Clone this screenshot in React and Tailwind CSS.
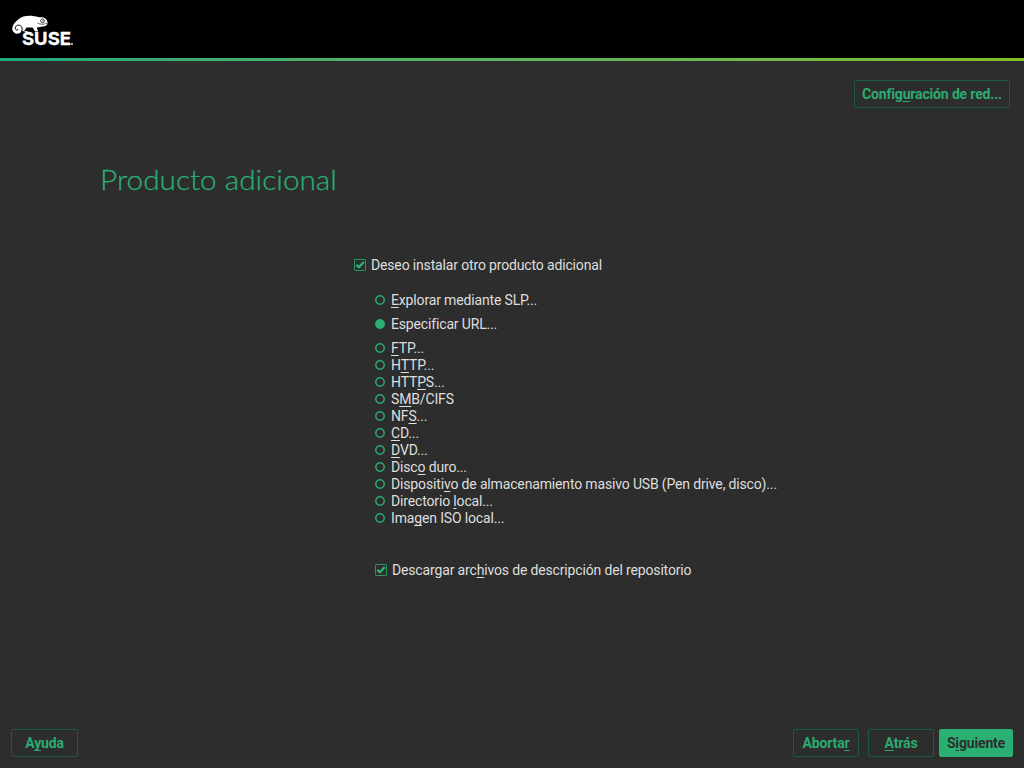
import React from 'react';

const SOURCES = [
  ['', 'F', 'TP...'],
  ['H', 'T', 'TP...'],
  ['HTT', 'P', 'S...'],
  ['S', 'M', 'B/CIFS'],
  ['NF', 'S', '...'],
  ['', 'C', 'D...'],
  ['', 'D', 'VD...'],
  ['Disc', 'o', ' duro...'],
  ['Dispositi', 'v', 'o de almacenamiento masivo USB (Pen drive, disco)...'],
  ['Directorio ', 'l', 'ocal...'],
  ['Ima', 'g', 'en ISO local...'],
];

function Label({ parts }) {
  const [before, key, after] = parts;
  return (
    <span className="whitespace-pre">
      {before}
      {key && <span className="underline decoration-1 underline-offset-2 [text-decoration-skip-ink:none]">{key}</span>}
      {after}
    </span>
  );
}

function Radio({ parts, checked = false }) {
  return (
    <label className="flex h-[17px] items-center gap-[6px]">
      <svg width="10" height="10" viewBox="0 0 10 10" className="mb-px shrink-0">
        <circle cx="5" cy="5" r={checked ? 4.9 : 4.2} fill={checked ? '#2bb073' : 'none'} stroke="#2bab70" strokeWidth={checked ? 0 : 1.5} />
      </svg>
      <Label parts={parts} />
    </label>
  );
}

function Check({ parts }) {
  return (
    <label className="flex h-[17px] items-center gap-[5px]">
      <svg width="12" height="12" viewBox="0 0 12 12" className="mb-px shrink-0" fill="none">
        <rect x="0.5" y="0.5" width="11" height="11" rx="0.6" stroke="#249864" />
        <path d="M2.3 5.8 4.9 8.2 9.8 3" stroke="#2bb577" strokeWidth="2.3" />
      </svg>
      <Label parts={parts} />
    </label>
  );
}

function Button({ parts, className, primary = false }) {
  return (
    <button
      className={`flex h-7 items-center justify-center rounded-[2px] border pt-px font-bold ${
        primary ? 'border-[#2bb073] bg-[#2bb073] text-[#2d2d2d]' : 'border-[#1d5a42] text-[#2bab70]'
      } ${className}`}
    >
      <Label parts={parts} />
    </button>
  );
}

function Logo() {
  return (
    <svg width="64" height="34" viewBox="0 0 64 34" role="img" aria-label="SUSE">
      <path
        d="M10 16L14.8 17L16.2 16H12.2L14.5 12.4H20.5L23 16.3H26L24.8 12.4C27 12.6 28.5 11.4 31 11.6C34 11.6 36 9.5 35.5 7C35 4.5 33 2.6 30.2 2.2L27 2.3C19-.2 11 .4 6.5 4.2C2.5 7.2-.2 11 .3 14.5C.8 18.4 6 20.2 8.7 17.3C10.3 15.5 9.8 12.3 7.5 11.4C5 10.5 3.3 13.2 4.8 14.8"
        fill="#fff"
      />
      <path d="M6.3 14C5.5 15.8 3.4 15.2 3.3 13.2C3.2 10.8 6 9.4 8.2 10.5C10.3 11.6 10.6 14 9.7 16" fill="none" stroke="#000" strokeWidth="1" />
      <circle cx="30.5" cy="5.8" r="1.9" fill="none" stroke="#000" strokeWidth="0.7" />
      <circle cx="31" cy="5.8" r="0.6" fill="#000" />
      <path d="M25.5 8C28.5 9.8 32 9.5 35 8.2" fill="none" stroke="#000" strokeWidth="0.6" />
      <text x="10" y="29.7" letterSpacing="0" textLength="49" lengthAdjust="spacingAndGlyphs" fill="#fff" stroke="#fff" strokeWidth="0.3" fontFamily="Inter, sans-serif" fontWeight="700" fontSize="18">SUSE</text>
      <circle cx="60" cy="29" r="0.9" fill="#fff" />
    </svg>
  );
}

export default function App() {
  return (
    <div className="flex h-[768px] w-[1024px] flex-col overflow-hidden bg-[#2d2d2d] font-['Roboto',sans-serif] text-[14px] leading-[17px] tracking-[-0.155px] text-[#dedede]">
      <header className="h-[58px] bg-black pl-3 pt-[15px]">
        <Logo />
      </header>
      <div className="h-[3px] bg-linear-to-r from-[#1fa97c] to-[#82bf25]" />
      <div className="flex justify-end pr-[14px] pt-[19px]">
        <Button parts={['Config', 'u', 'ración de red...']} className="w-[156px]" />
      </div>
      <main className="flex flex-1 flex-col">
        <h1 className="mt-[51px] ml-[100px] origin-left scale-x-[1.063] self-start font-['Lato',sans-serif] text-[28px] leading-[40px] font-light tracking-normal text-[#2bab70] [-webkit-text-stroke:0.3px_#2bab70]">Producto adicional</h1>
        <section className="mt-[58px] flex flex-col pl-[354px]">
          <Check parts={['Deseo instalar otro producto adicional', '', '']} />
          <div className="mt-[18px] flex flex-col pl-[21px]">
            <Radio parts={['', 'E', 'xplorar mediante SLP...']} />
            <div className="my-[7px]">
              <Radio checked parts={['Especificar URL...', '', '']} />
            </div>
            {SOURCES.map((parts) => (
              <Radio key={parts.join('')} parts={parts} />
            ))}
            <div className="mt-[35px]">
              <Check parts={['Descargar arc', 'h', 'ivos de descripción del repositorio']} />
            </div>
          </div>
        </section>
      </main>
      <footer className="flex items-center pb-[11px] pl-[11px] pr-[11px]">
        <Button parts={['A', 'y', 'uda']} className="mr-auto w-[67px]" />
        <Button parts={['Aborta', 'r', '']} className="w-[66px]" />
        <Button parts={['', 'A', 'trás']} className="ml-[9px] w-[66px]" />
        <Button primary parts={['S', 'i', 'guiente']} className="ml-[5px] w-[74px]" />
      </footer>
    </div>
  );
}
